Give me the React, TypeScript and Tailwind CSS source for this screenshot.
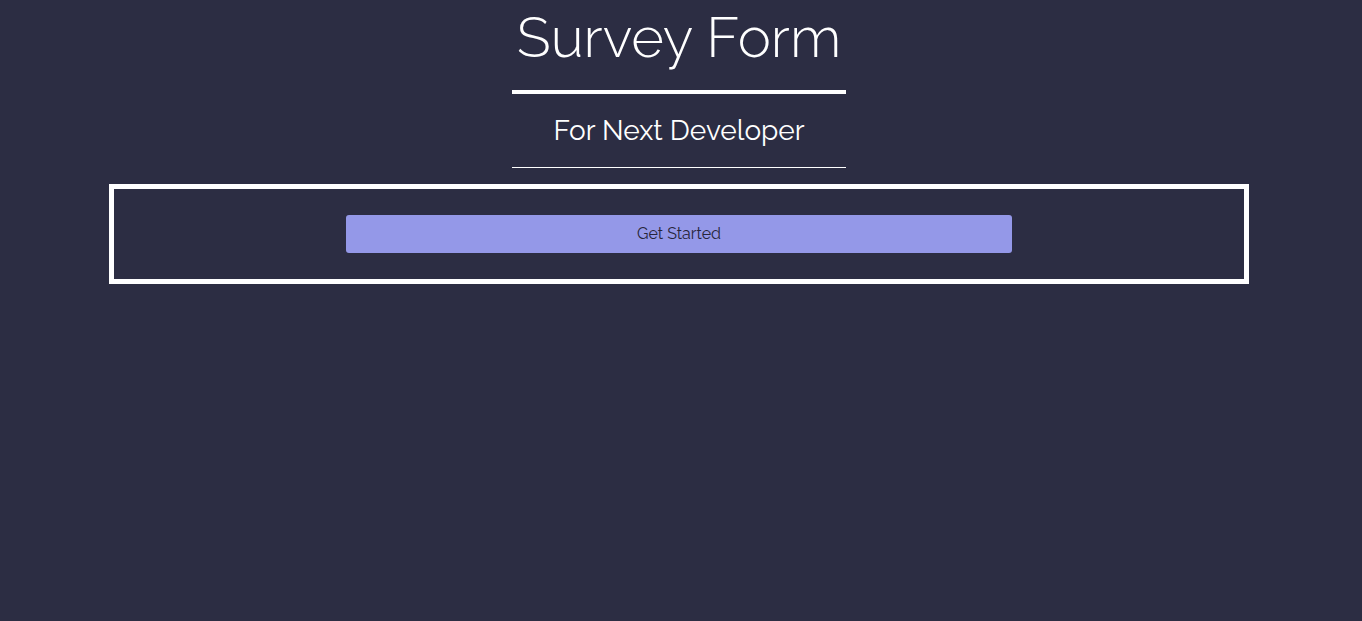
export default function App() {
  return (
    <div
      className="min-h-[621px] w-full bg-[#2c2d43] pr-[4px] text-white"
      style={{ fontFamily: "Raleway, Lato, 'Open Sans', sans-serif" }}
    >
      <div className="flex flex-col items-center">
        <div className="flex w-[334px] flex-col items-center">
          <h1 className="mt-[2px] whitespace-nowrap text-[56px] font-light leading-[70px]">Survey Form</h1>
          <div className="mt-[18px] h-[4px] w-full bg-white" />
          <h2 className="mt-[21px] whitespace-nowrap text-[28px] font-normal leading-[32px]">For Next Developer</h2>
          <div className="mt-[20px] h-px w-full bg-white" />
        </div>
        <div className="mt-[16px] flex h-[100px] w-[1140px] items-center justify-center border-[5px] border-white">
          <button className="h-[38px] w-[666px] rounded-[3px] bg-[#9498e8] text-[16px] text-[#26253a]">
            Get Started
          </button>
        </div>
      </div>
    </div>
  );
}
